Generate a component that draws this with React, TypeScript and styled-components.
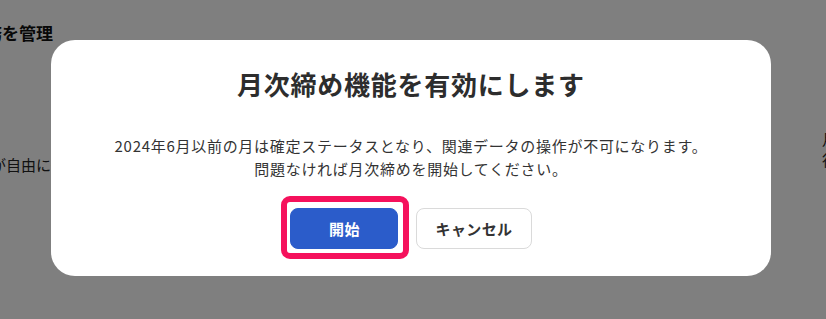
import styled, { createGlobalStyle } from "styled-components";

const GlobalStyle = createGlobalStyle`
  html, body {
    margin: 0;
    padding: 0;
    width: 100%;
    height: 100%;
    overflow: hidden;
    background: #ffffff;
    font-family: "Noto Sans CJK JP", "Noto Sans", sans-serif;
    color: #1a1a1a;
  }
`;

export default function App() {
  return (
    <>
      <GlobalStyle />
      <Page>
        <MainColumn>
          <PageHeading>業務を管理</PageHeading>
          <PageText>スタッフが自由に編集できます</PageText>
        </MainColumn>
        <SideColumn>
          <SideText>月次</SideText>
          <SideText>行う</SideText>
        </SideColumn>
      </Page>

      <Overlay>
        <Dialog role="dialog" aria-modal="true">
          <Title>月次締め機能を有効にします</Title>
          <Message>
            2024年6月以前の月は確定ステータスとなり、関連データの操作が不可になります。
            <br />
            問題なければ月次締めを開始してください。
          </Message>
          <ButtonRow>
            <Highlight>
              <Button $variant="primary">開始</Button>
            </Highlight>
            <Button $variant="secondary">キャンセル</Button>
          </ButtonRow>
        </Dialog>
      </Overlay>
    </>
  );
}

const Page = styled.div`
  box-sizing: border-box;
  width: 100%;
  height: 100vh;
  display: grid;
  grid-template-columns: 822px 200px;
  overflow: hidden;
`;

const MainColumn = styled.div`
  display: flex;
  flex-direction: column;
  padding-top: 21px;
`;

const PageHeading = styled.h2`
  margin: 0 0 0 -32px;
  font-size: 17px;
  font-weight: 700;
  line-height: 24px;
  color: #111;
  white-space: nowrap;
`;

const PageText = styled.p`
  margin: 109px 0 0 -69px;
  font-size: 15px;
  line-height: 22px;
  color: #222;
  white-space: nowrap;
`;

const SideColumn = styled.div`
  display: flex;
  flex-direction: column;
  padding-top: 128px;
`;

const SideText = styled.span`
  font-size: 15px;
  line-height: 21px;
  color: #222;
  white-space: nowrap;
`;

const Overlay = styled.div`
  position: fixed;
  inset: 0;
  background: rgba(0, 0, 0, 0.5);
  display: flex;
  justify-content: center;
  align-items: center;
`;

const Dialog = styled.div`
  box-sizing: border-box;
  width: 720px;
  margin-left: -4px;
  margin-top: -3px;
  padding: 24px 24px 27px;
  border-radius: 24px;
  background: #ffffff;
  display: flex;
  flex-direction: column;
  align-items: center;
`;

const Title = styled.h1`
  margin: 0;
  font-size: 26px;
  font-weight: 700;
  line-height: 39px;
  letter-spacing: 0.75px;
  color: #2d2d2d;
`;

const Message = styled.p`
  margin: 32px 0 0;
  font-size: 15px;
  line-height: 22.5px;
  letter-spacing: 0.72px;
  color: #333;
  text-align: center;
`;

const ButtonRow = styled.div`
  display: flex;
  align-items: center;
  gap: 18px;
  margin-top: 28px;
`;

const Highlight = styled.div`
  position: relative;
  display: flex;

  &::after {
    content: "";
    position: absolute;
    inset: -12px -11px -10px -9px;
    border: 6px solid #f5115c;
    border-radius: 9px;
    pointer-events: none;
  }
`;

const Button = styled.button<{ $variant: "primary" | "secondary" }>`
  box-sizing: border-box;
  height: 41px;
  min-width: ${(props) => (props.$variant === "primary" ? "108px" : "115px")};
  padding: 0 18px;
  border-radius: 8px;
  border: 1px solid ${(props) => (props.$variant === "primary" ? "#2b5cca" : "#dadada")};
  background: ${(props) => (props.$variant === "primary" ? "#2b5cca" : "#ffffff")};
  color: ${(props) => (props.$variant === "primary" ? "#ffffff" : "#333333")};
  font-family: inherit;
  font-size: 15px;
  font-weight: 700;
  letter-spacing: 0.4px;
  cursor: pointer;
`;
